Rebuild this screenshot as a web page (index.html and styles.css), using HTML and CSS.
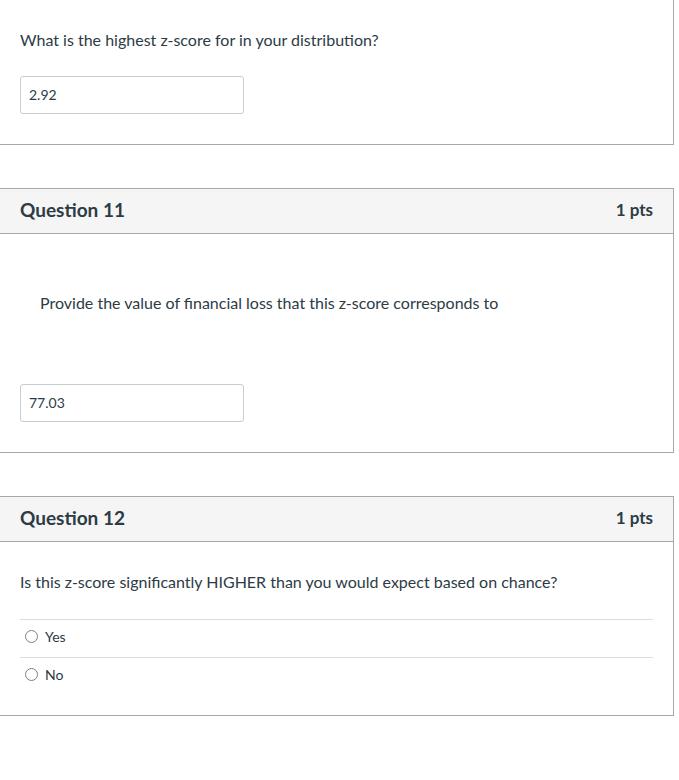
FILE: index.html
```html
<!DOCTYPE html>
<html lang="en">
<head>
<meta charset="utf-8">
<title>Quiz</title>
<link rel="stylesheet" href="styles.css">
</head>
<body>
<div class="quiz">
  <div class="question question-first">
    <div class="question-body">
      <div class="question-text q-first-text">What is the highest z-score for in your distribution?</div>
      <div class="answer-input">2.92</div>
    </div>
  </div>

  <div class="question">
    <div class="question-header">
      <span class="question-name">Question 11</span>
      <span class="question-points">1 pts</span>
    </div>
    <div class="question-body">
      <div class="question-text q-indented">Provide the value of financial loss that this z-score corresponds to</div>
      <div class="answer-input">77.03</div>
    </div>
  </div>

  <div class="question">
    <div class="question-header">
      <span class="question-name">Question 12</span>
      <span class="question-points">1 pts</span>
    </div>
    <div class="question-body body-choices">
      <div class="question-text q-choice-text">Is this z-score significantly HIGHER than you would expect based on chance?</div>
      <div class="answers">
        <label class="answer"><span class="radio"></span><span class="answer-label">Yes</span></label>
        <label class="answer"><span class="radio"></span><span class="answer-label">No</span></label>
      </div>
    </div>
  </div>
</div>
</body>
</html>
```

FILE: styles.css
```css
html, body {
  margin: 0;
  padding: 0;
  background: #ffffff;
}

body {
  font-family: Lato, "Open Sans", "Liberation Sans", sans-serif;
  color: #2d3b45;
}

.quiz {
  width: 675px;
  margin-left: -1px;
}

.question {
  border: 1px solid #a8a8a8;
  margin-bottom: 43px;
  background: #fff;
}

.question-first {
  margin-top: -1px;
}

.question-header {
  height: 45px;
  box-sizing: border-box;
  background: #f5f5f5;
  border-bottom: 1px solid #a8a8a8;
  display: flex;
  align-items: center;
  justify-content: space-between;
  padding: 0 20px 3px 20px;
  font-weight: 700;
  font-size: 19px;
}

.question-points {
  font-size: 17px;
}

.question-body {
  padding: 0 20px 30px 20px;
}

.question-text {
  font-size: 16px;
  line-height: 24px;
}

.q-first-text {
  padding-top: 28px;
  margin-bottom: 24px;
}

.q-indented {
  padding: 57px 0 0 20px;
  margin-bottom: 69px;
}

.answer-input {
  width: 224px;
  height: 38px;
  box-sizing: border-box;
  border: 1px solid #c7cdd1;
  border-radius: 3px;
  padding: 0 8px;
  font-size: 14px;
  line-height: 36px;
  color: #2d3b45;
}

.body-choices {
  padding-bottom: 20px;
}

.q-choice-text {
  padding-top: 28px;
  margin-bottom: 25px;
}

.answers {
  display: flex;
  flex-direction: column;
}

.answer {
  display: flex;
  align-items: center;
  height: 38px;
  box-sizing: border-box;
  border-top: 1px solid #dcdcdc;
  padding: 0 0 5px 5px;
  font-size: 14px;
}

.radio {
  width: 13px;
  height: 13px;
  box-sizing: border-box;
  border: 1px solid #808080;
  border-radius: 50%;
  margin-right: 7px;
}
```
